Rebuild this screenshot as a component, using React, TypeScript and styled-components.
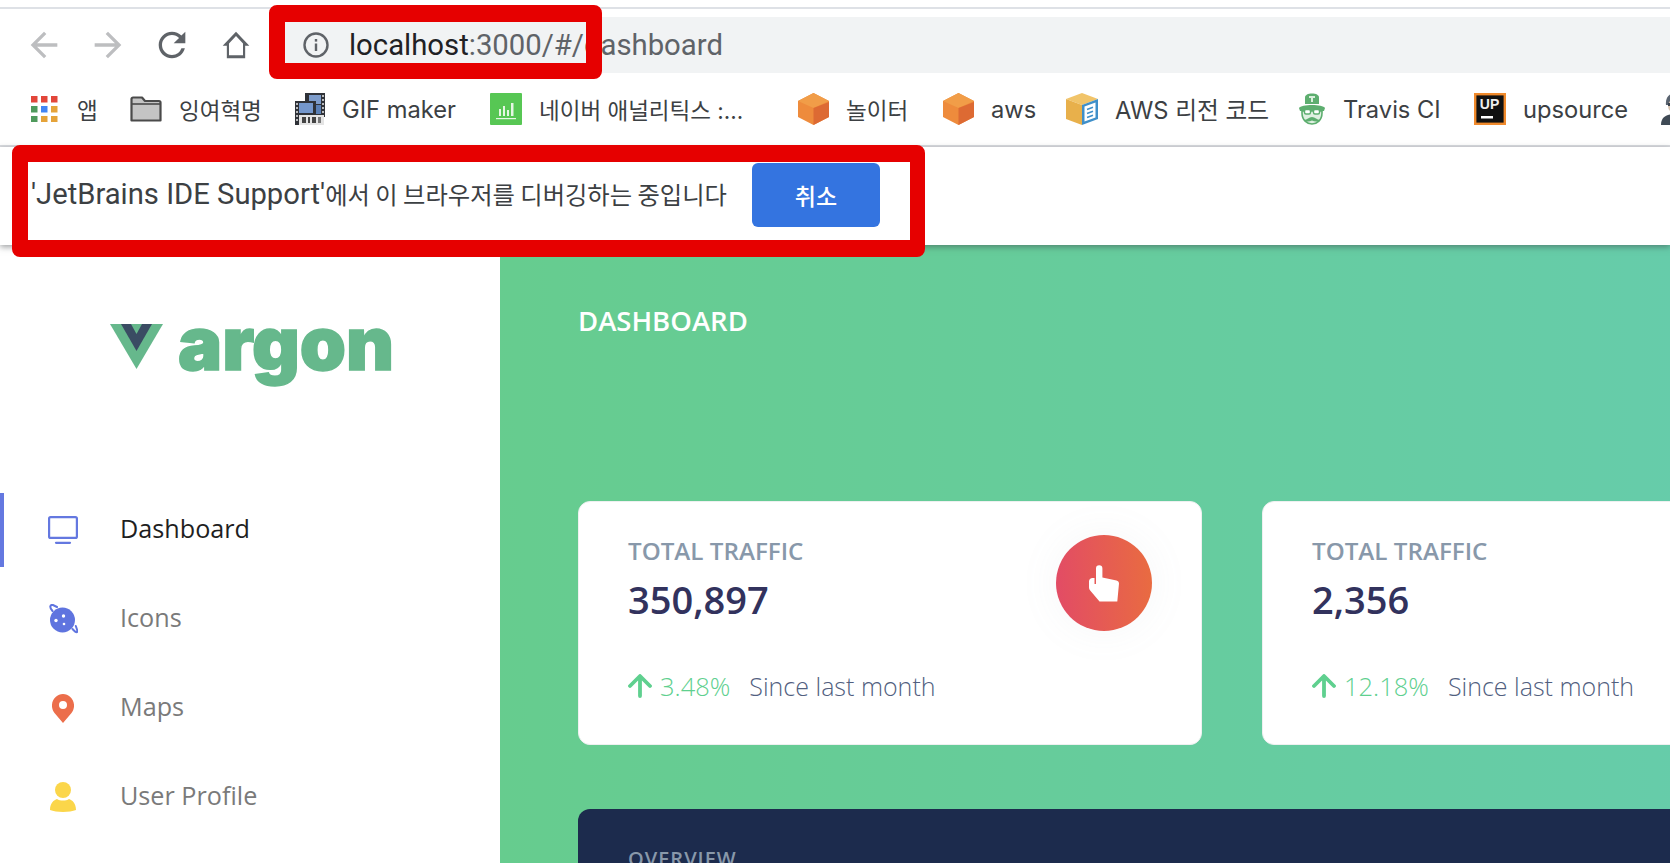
import styled, { createGlobalStyle } from 'styled-components';

const GlobalStyle = createGlobalStyle`
  html, body {
    margin: 0;
    padding: 0;
    background: #fff;
  }
`;

const urlFont = `Roboto, 'Noto Sans CJK KR', sans-serif`;
const chromeFont = `Inter, 'Noto Sans CJK KR', sans-serif`;
const koreanFont = `'Noto Sans CJK KR', sans-serif`;
const pageFont = `'Open Sans', 'Noto Sans CJK KR', sans-serif`;

const bookmarks = [
  { icon: <AppsIcon />, label: '앱', width: 65, korean: true },
  { icon: <FolderIcon />, label: '잉여혁명', width: 131, korean: true },
  { icon: <GifIcon />, label: 'GIF maker', width: 161, korean: false },
  { icon: <ChartIcon />, label: '네이버 애널리틱스 :...', width: 274, korean: true },
  { icon: <CubeIcon />, label: '놀이터', width: 111, korean: true },
  { icon: <CubeIcon />, label: 'aws', width: 89, korean: false },
  { icon: <BoxIcon />, label: 'AWS 리전 코드', width: 198, korean: false },
  { icon: <TravisIcon />, label: 'Travis CI', width: 142, korean: false },
  { icon: <UpsourceIcon />, label: 'upsource', width: 153, korean: false },
  { icon: <AvatarIcon />, label: '', width: 30, korean: false },
];

const navItems = [
  { icon: <MonitorIcon />, label: 'Dashboard', active: true },
  { icon: <PlanetIcon />, label: 'Icons', active: false },
  { icon: <PinIcon />, label: 'Maps', active: false },
  { icon: <UserIcon />, label: 'User Profile', active: false },
];

const stats = [
  { label: 'TOTAL TRAFFIC', value: '350,897', rate: '3.48%', badge: true },
  { label: 'TOTAL TRAFFIC', value: '2,356', rate: '12.18%', badge: false },
];

export default function App() {
  return (
    <Page>
      <GlobalStyle />
      <Toolbar>
        <NavIcon $color='#bdbec0'><path d='M20 11H7.83l5.59-5.59L12 4l-8 8 8 8 1.41-1.41L7.83 13H20v-2z' /></NavIcon>
        <NavIcon $color='#bdbec0'><path d='M4 11h12.17l-5.59-5.59L12 4l8 8-8 8-1.41-1.41L16.17 13H4v-2z' /></NavIcon>
        <NavIcon $color='#5f6368'><path d='M17.65 6.35A7.958 7.958 0 0 0 12 4c-4.42 0-7.99 3.58-7.99 8s3.57 8 7.99 8c3.73 0 6.84-2.55 7.73-6h-2.08A5.99 5.99 0 0 1 12 18c-3.31 0-6-2.69-6-6s2.69-6 6-6c1.66 0 3.14.69 4.22 1.78L13 11h7V4l-2.35 2.35z' /></NavIcon>
        <NavIcon $color='#5f6368'><path d='M12 4 4 12.500h2.500V20h11v-7.500H20L12 4zm0 2.600 4.200 4.500V18.200H7.800v-7.100L12 6.600z' /></NavIcon>
        <AddressBar>
          <InfoIcon viewBox='0 0 26 26'>
            <circle cx='13' cy='13' r='11.500' fill='none' stroke='#5f6368' strokeWidth='2.400' />
            <rect x='11.800' y='11.500' width='2.400' height='7.500' fill='#5f6368' />
            <rect x='11.800' y='7' width='2.400' height='2.600' fill='#5f6368' />
          </InfoIcon>
          <UrlHost>localhost</UrlHost>
          <UrlPath>:3000/#/dashboard</UrlPath>
        </AddressBar>
      </Toolbar>

      <BookmarkBar>
        {bookmarks.map((item, index) => (
          <Bookmark key={index} $width={item.width}>
            {item.icon}
            {item.label && <BookmarkLabel $korean={item.korean}>{item.label}</BookmarkLabel>}
          </Bookmark>
        ))}
      </BookmarkBar>

      <InfoBar>
        <InfoText>
          <InfoLatin>'JetBrains IDE Support'</InfoLatin>에서 이 브라우저를 디버깅하는 중입니다
        </InfoText>
        <CancelButton>취소</CancelButton>
      </InfoBar>

      <Content>
        <Sidebar>
          <Logo>
            <svg width='53' height='45' viewBox='0 0 53 45'>
              <polygon points='0,0 53,0 26.500,45' fill='#66b88c' />
              <polygon points='11,0 42,0 26.500,27' fill='#3a4c63' />
              <polygon points='21,0 32,0 26.500,10' fill='#66b88c' />
            </svg>
            <LogoWord>argon</LogoWord>
          </Logo>
          <Nav>
            {navItems.map((item) => (
              <NavRow key={item.label} $active={item.active}>
                <NavGlyph>{item.icon}</NavGlyph>
                {item.label}
              </NavRow>
            ))}
          </Nav>
        </Sidebar>

        <Main>
          <Heading>DASHBOARD</Heading>
          <CardRow>
            {stats.map((stat) => (
              <Card key={stat.value}>
                <CardTop>
                  <div>
                    <CardLabel>{stat.label}</CardLabel>
                    <CardValue>{stat.value}</CardValue>
                  </div>
                  {stat.badge && (
                    <Badge>
                      <HandIcon />
                    </Badge>
                  )}
                </CardTop>
                <CardFoot>
                  <svg width='24' height='24' viewBox='0 0 24 24' fill='none' stroke='#5fd08f' strokeWidth='3.800' strokeLinecap='round' strokeLinejoin='round'>
                    <path d='M12 22V3M2 12 12 2l10 10' />
                  </svg>
                  <Rate>{stat.rate}</Rate>
                  <Since>Since last month</Since>
                </CardFoot>
              </Card>
            ))}
          </CardRow>
          <Overview>
            <OverviewLabel>OVERVIEW</OverviewLabel>
          </Overview>
        </Main>
      </Content>

      <AddressMark />
      <InfoMark />
    </Page>
  );
}

function AppsIcon() {
  const colors = ['#e2463a', '#e2463a', '#e2463a', '#4f9a5c', '#4285f4', '#e5a33a', '#4f9a5c', '#e5a33a', '#e5a33a'];
  return (
    <svg width='29' height='26' viewBox='0 0 29 26'>
      {colors.map((color, index) => (
        <rect key={index} x={(index % 3) * 10} y={Math.floor(index / 3) * 10} width='6.500' height='6.500' fill={color} />
      ))}
    </svg>
  );
}

function FolderIcon() {
  return (
    <svg width='32' height='26' viewBox='0 0 32 26'>
      <path d='M1.500 24.500V3a1.500 1.500 0 0 1 1.500-1.500h9L15 5h14a1.500 1.500 0 0 1 1.500 1.500v18z' fill='#c4c4c4' stroke='#4a4a4a' strokeWidth='2.200' strokeLinejoin='round' />
      <path d='M2 8h28' stroke='#4a4a4a' strokeWidth='1.600' />
    </svg>
  );
}

function GifIcon() {
  return (
    <svg width='30' height='32' viewBox='0 0 30 32'>
      <rect x='10' y='0' width='20' height='24' fill='#2f3238' />
      <rect x='14' y='2' width='12' height='9' fill='#7d9ccb' />
      <rect x='14' y='12' width='12' height='9' fill='#5a7fb5' />
      <path d='M28 2v20' stroke='#e8e8e8' strokeWidth='1.500' strokeDasharray='2 2' />
      <rect x='0' y='8' width='21' height='24' fill='#2f3238' />
      <rect x='4' y='10' width='14' height='10' fill='#7497cc' />
      <path d='M2 10v20' stroke='#e8e8e8' strokeWidth='1.500' strokeDasharray='2 2' />
      <rect x='4' y='22' width='25' height='10' fill='#e4e4e4' />
      <rect x='7' y='24' width='4' height='6' fill='#444' />
      <rect x='13' y='24' width='2' height='6' fill='#444' />
      <rect x='17' y='24' width='4' height='6' fill='#444' />
      <rect x='23' y='24' width='3' height='6' fill='#777' />
    </svg>
  );
}

function ChartIcon() {
  return (
    <svg width='32' height='32' viewBox='0 0 32 32'>
      <rect width='32' height='32' rx='1' fill='#57c754' />
      <g fill='#e6f6e4'>
        <rect x='9' y='16' width='2' height='7' />
        <rect x='13' y='13' width='2' height='10' />
        <rect x='17' y='17' width='2' height='6' />
        <rect x='21' y='10' width='2.500' height='13' />
        <rect x='6' y='25' width='20' height='1.200' />
      </g>
    </svg>
  );
}

function CubeIcon() {
  return (
    <svg width='31' height='32' viewBox='0 0 31 32'>
      <polygon points='15.500,0 31,8 31,24 15.500,32 0,24 0,8' fill='#ee8b3c' />
      <polygon points='15.500,0 31,8 15.500,15 0,8' fill='#f19d48' />
      <polygon points='31,9 31,24 15.500,32 15.500,15' fill='#dd6a33' />
    </svg>
  );
}

function BoxIcon() {
  return (
    <svg width='32' height='32' viewBox='0 0 32 32'>
      <polygon points='16,0 32,6 16,12 0,6' fill='#f1c469' />
      <polygon points='0,6 16,12 16,32 0,26' fill='#e8b04b' />
      <polygon points='16,12 32,6 32,26 16,32' fill='#3f8fc9' />
      <polygon points='18.500,13.500 29.500,9.500 29.500,24.500 18.500,28.500' fill='#fff' />
      <path d='M21 16.500 27 14.200M21 20.500 27 18.200M21 24.500 27 22.200' stroke='#3f8fc9' strokeWidth='1.500' />
    </svg>
  );
}

function TravisIcon() {
  return (
    <svg width='28' height='32' viewBox='0 0 28 32'>
      <path d='M7 11V4.500C7 2 10 .500 14 .500S21 2 21 4.500V11z' fill='#5dae6f' />
      <rect x='11' y='3' width='6' height='2' fill='#d9efdc' />
      <rect x='13' y='5' width='2' height='4' fill='#d9efdc' />
      <path d='M1 15c2-4 24-4 26 0l-1 3H2z' fill='#5dae6f' />
      <path d='M4 18v2c0 7 5 11 10 11s10-4 10-11v-2z' fill='#dff0e1' stroke='#5dae6f' strokeWidth='1.600' />
      <rect x='6.500' y='16.500' width='6' height='4.500' rx='1.500' fill='#fff' stroke='#5dae6f' strokeWidth='1.400' />
      <rect x='15.500' y='16.500' width='6' height='4.500' rx='1.500' fill='#fff' stroke='#5dae6f' strokeWidth='1.400' />
      <path d='M6 27c3 0 5-3 8-3s5 3 8 3c-2 2-5 2-8 .500-3 1.500-6 1.500-8-.500z' fill='#5dae6f' />
    </svg>
  );
}

function UpsourceIcon() {
  return (
    <svg width='32' height='32' viewBox='0 0 32 32'>
      <rect x='1.200' y='1.200' width='29.600' height='29.600' fill='#111' stroke='#f08a2c' strokeWidth='2.400' />
      <text x='15.500' y='16' textAnchor='middle' fontFamily='Liberation Sans, sans-serif' fontWeight='700' fontSize='14' fill='#eee'>UP</text>
      <rect x='7' y='23' width='12' height='2.500' fill='#fff' />
    </svg>
  );
}

function AvatarIcon() {
  return (
    <svg width='30' height='32' viewBox='0 0 30 32'>
      <path d='M5 12C4 4 9 0 14 0s9 4 8 12z' fill='#5a6470' />
      <ellipse cx='14' cy='13' rx='7' ry='7' fill='#d8c4b0' />
      <rect x='7' y='10' width='14' height='3' fill='#39424c' />
      <path d='M0 32c0-8 5-11 14-11s14 3 14 11z' fill='#3f4a55' />
    </svg>
  );
}

function MonitorIcon() {
  return (
    <svg width='30' height='28' viewBox='0 0 30 28' fill='none' stroke='#6478e0' strokeWidth='2.200'>
      <rect x='1.100' y='1.100' width='27.800' height='20.800' rx='1.500' />
      <path d='M8 26.800h14' strokeLinecap='round' />
    </svg>
  );
}

function PlanetIcon() {
  return (
    <svg width='30' height='30' viewBox='0 0 30 30'>
      <circle cx='14.500' cy='16' r='12.500' fill='#5f74df' />
      <path d='M4.500 7C1 3 2 .500 5 1l4 2M24.500 25c4 4.500 5.500 4 4.500 .500l-1.200-3.500' fill='none' stroke='#5f74df' strokeWidth='2' strokeLinecap='round' />
      <circle cx='15.500' cy='12' r='1.700' fill='#fff' />
      <circle cx='8' cy='16.500' r='1.700' fill='#fff' />
      <circle cx='16' cy='20' r='1.300' fill='#fff' />
    </svg>
  );
}

function PinIcon() {
  return (
    <svg width='22' height='29' viewBox='0 0 22 29'>
      <path fillRule='evenodd' d='M11 29 2.500 19C-4 10 3 0 11 0s15 10 8.500 19zM11 7a4 4 0 1 0 0 8 4 4 0 0 0 0-8z' fill='#ec6e4b' />
    </svg>
  );
}

function UserIcon() {
  return (
    <svg width='26' height='30' viewBox='0 0 26 30'>
      <circle cx='13' cy='8' r='8' fill='#fbd64a' />
      <path d='M0 28c0-7 4-10 7-11 3 2 9 2 12 0 3 1 7 4 7 11-6 2.500-20 2.500-26 0z' fill='#fbd64a' />
    </svg>
  );
}

function HandIcon() {
  return (
    <svg width='30' height='37' viewBox='0 0 30 37'>
      <path fill='#fff' d='M7 3.500a3.200 3.200 0 0 1 6.400 0V12.500L27.500 15.500c1.500.400 2.500 1.500 2.500 3L28.300 36.500H10.500L1.200 25.500C.400 24.500 0 23.500 0 22v-5.500c0-2 1.500-3.500 3.500-3.500H5.500v6H7z' />
    </svg>
  );
}

const Page = styled.div`
  position: relative;
  width: 1670px;
  height: 863px;
  overflow: hidden;
  display: flex;
  flex-direction: column;
  background: #fff;
`;

const Toolbar = styled.div`
  margin-top: 7px;
  height: 56px;
  padding-top: 8px;
  padding-left: 24px;
  border-top: 2px solid #dee1e6;
  display: flex;
  align-items: center;
`;

const NavIcon = styled.svg.attrs({ viewBox: '0 0 24 24', width: 40, height: 40 })<{ $color: string }>`
  flex: none;
  margin-right: 24px;
  fill: ${(props) => props.$color};
`;

const AddressBar = styled.div`
  flex: 1;
  height: 56px;
  padding-left: 23px;
  display: flex;
  align-items: center;
  background: #f1f3f4;
  font-family: ${urlFont};
  font-size: 29.300px;
`;

const InfoIcon = styled.svg`
  width: 26px;
  height: 26px;
  margin-right: 20px;
  flex: none;
`;

const UrlHost = styled.span`
  color: #202124;
`;

const UrlPath = styled.span`
  color: #5f6368;
`;

const BookmarkBar = styled.div`
  height: 72px;
  border-bottom: 2px solid #dadce0;
  padding-left: 31px;
  display: flex;
  align-items: center;
  gap: 34px;
  font-family: ${chromeFont};
  font-size: 23.700px;
  color: #3c4043;
  white-space: nowrap;
`;

const Bookmark = styled.div<{ $width: number }>`
  display: flex;
  align-items: center;
  gap: 17px;
  flex: none;
  width: ${(props) => props.$width}px;

  svg {
    flex: none;
  }
`;

const BookmarkLabel = styled.span<{ $korean: boolean }>`
  font-size: ${(props) => (props.$korean ? '22.500px' : 'inherit')};
`;

const InfoBar = styled.div`
  height: 98px;
  padding-left: 31px;
  display: flex;
  align-items: center;
  gap: 25px;
  position: relative;
  z-index: 1;
  background: #fff;
  box-shadow: 0 2px 6px rgba(60, 64, 67, 0.5);
`;

const InfoText = styled.span`
  margin-bottom: 5px;
  font-family: ${koreanFont};
  font-size: 24.300px;
  color: #3c4043;
  white-space: nowrap;
`;

const InfoLatin = styled.span`
  font-family: ${urlFont};
  font-size: 29.200px;
`;

const CancelButton = styled.button`
  width: 128px;
  height: 64px;
  margin-top: -2px;
  border: 0;
  border-radius: 6px;
  background: #3474e0;
  color: #fff;
  font-family: ${chromeFont};
  font-size: 23px;
  font-weight: 500;
`;

const Content = styled.div`
  flex: 1;
  min-height: 0;
  display: flex;
`;

const Sidebar = styled.aside`
  flex: none;
  width: 500px;
  padding-top: 79px;
  background: #fff;
`;

const Logo = styled.div`
  height: 64px;
  margin-left: 110px;
  display: flex;
  align-items: flex-start;
  gap: 15px;
`;

const LogoWord = styled.span`
  font-family: Inter, sans-serif;
  font-size: 74px;
  font-weight: 900;
  line-height: 39px;
  color: #66b88c;
  -webkit-text-stroke: 1.500px #66b88c;
`;

const Nav = styled.nav`
  margin-top: 105px;
  display: flex;
  flex-direction: column;
  gap: 15px;
`;

const NavRow = styled.a<{ $active: boolean }>`
  height: 70px;
  padding-bottom: 4px;
  display: flex;
  align-items: center;
  padding-left: ${(props) => (props.$active ? '44px' : '48px')};
  border-left: ${(props) => (props.$active ? '4px solid #6478e0' : '0')};
  font-family: ${pageFont};
  font-size: 25.200px;
  color: ${(props) => (props.$active ? '#1f1f1f' : '#7a7a7a')};
`;

const NavGlyph = styled.span`
  width: 30px;
  margin-right: 42px;
  padding-top: 4px;
  display: flex;
  justify-content: center;
`;

const Main = styled.main`
  flex: 1;
  min-width: 0;
  min-height: 0;
  display: flex;
  flex-direction: column;
  padding: 59px 0 0 78px;
  background: linear-gradient(87deg, #66cc8e, #66ccaa);
`;

const Heading = styled.h1`
  flex: none;
  margin: 0;
  height: 197px;
  font-family: ${pageFont};
  font-size: 27.500px;
  line-height: 34px;
  font-weight: 600;
  color: #fff;
`;

const CardRow = styled.div`
  flex: none;
  display: flex;
  gap: 60px;
`;

const Card = styled.section`
  flex: none;
  box-sizing: border-box;
  width: 624px;
  height: 244px;
  padding: 32px 49px 0;
  border: 1px solid #eef0f0;
  border-radius: 12px;
  background: #fff;
`;

const CardTop = styled.div`
  display: flex;
  justify-content: space-between;
  height: 135px;
`;

const CardLabel = styled.div`
  font-family: ${pageFont};
  font-size: 24.200px;
  line-height: 34px;
  font-weight: 600;
  color: #8898aa;
`;

const CardValue = styled.div`
  margin-top: 6px;
  font-family: ${pageFont};
  font-size: 38px;
  line-height: 50px;
  font-weight: 600;
  color: #32325d;
`;

const Badge = styled.div`
  width: 96px;
  height: 96px;
  margin-top: 1px;
  border-radius: 50%;
  display: flex;
  align-items: center;
  justify-content: center;
  background: linear-gradient(87deg, #e24b66, #e96c40);
  box-shadow: 0 0 40px rgba(136, 152, 170, 0.08);
`;

const CardFoot = styled.div`
  display: flex;
  align-items: center;
  font-family: ${pageFont};
  font-size: 25px;
  font-weight: 300;
`;

const Rate = styled.span`
  margin-left: 8px;
  margin-right: 19px;
  font-size: 25.500px;
  color: #5fd08f;
`;

const Since = styled.span`
  color: #525f7f;
`;

const Overview = styled.section`
  flex: none;
  height: 54px;
  box-sizing: border-box;
  margin-top: 64px;
  padding: 36px 50px 0;
  border-radius: 12px 0 0 0;
  background: #1c2b4d;
`;

const OverviewLabel = styled.div`
  font-family: ${pageFont};
  font-size: 20px;
  font-weight: 600;
  letter-spacing: 1px;
  color: #8898aa;
`;

const AddressMark = styled.div`
  position: absolute;
  left: 269px;
  top: 5px;
  box-sizing: border-box;
  width: 333px;
  height: 74px;
  border: solid #e60000;
  border-width: 17px 16px 16px;
  border-radius: 8px;
  z-index: 2;
`;

const InfoMark = styled.div`
  position: absolute;
  left: 12px;
  top: 145px;
  box-sizing: border-box;
  width: 913px;
  height: 112px;
  border: solid #e60000;
  border-width: 17px 15px 17px 16px;
  border-radius: 8px;
  z-index: 2;
`;
